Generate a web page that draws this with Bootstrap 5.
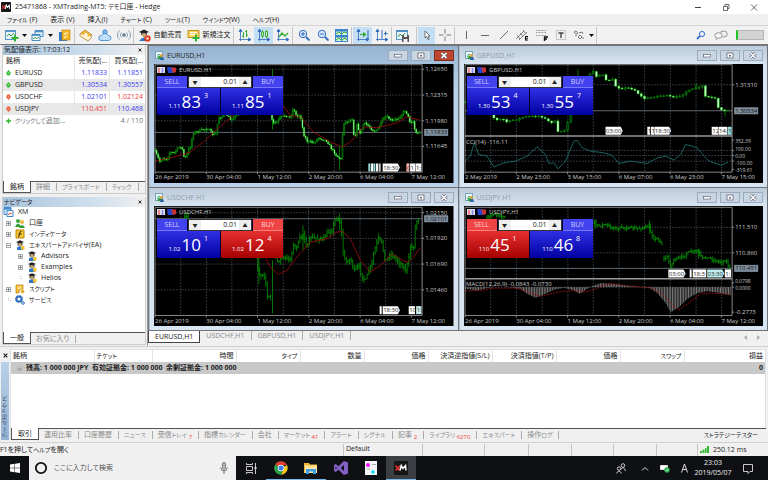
<!DOCTYPE html>
<html lang="ja">
<head>
<meta charset="utf-8">
<meta name="viewport" content="width=device-width, initial-scale=1">
<title>25471868 - XMTrading-MT5</title>
<link href="https://cdn.jsdelivr.net/npm/bootstrap@5.3.0/dist/css/bootstrap.min.css" rel="stylesheet">
<style>
body{font-family:"Open Sans","Noto Sans CJK JP",sans-serif;font-size:7px;line-height:10px;color:#222;background:#f0f0f0;font-feature-settings:"palt"}
button,input{font:inherit;color:inherit;border:0;background:none;padding:0;margin:0;border-radius:0;font-feature-settings:inherit}
svg{display:block;flex:none}
a{color:inherit;text-decoration:none}
.kana{font-size:6px}
/* title and menu */
.titlebar{background:#fff;height:14px;padding:0 10px 0 1px}
.menubar{height:12px;padding-left:7px;gap:13px;border-bottom:1px solid #d4d4d4}
/* toolbar */
.toolbar{height:19px;border-bottom:1px solid #777;padding-left:3px;background:#f1f1f1}
.tb{width:19px;height:17px;display:flex;align-items:center;justify-content:center;flex:none}
.tb.slim{width:17px}
.tb.arrow{width:9px}
.tb.wide{width:49px;gap:3px}
.tb.on{background:#c4def4}
.divider{width:1px;height:17px;background:#c6c6c6;margin-right:1px;flex:none}
.meter{width:28px;height:10px;background:#d2d2d2;border:1px solid #b5b5b5;border-left:2px solid #1fc41f}
/* side panels */
.side{width:148px;border-right:1px solid #9a9a9a;padding:0 1px 1px 2px;gap:3px;flex:none}
.panel{border:1px solid #ccc;border-top:0;background:#fff;flex:1 1 0}
.paneltitle{height:10px;padding:0 3px 0 1px;background:linear-gradient(90deg,#a9c4dd,#d5e2ee 70%,#f0f0f0)}
.quotes{width:100%;table-layout:fixed}
.quotes th,.quotes td{height:12px;padding:0 2px;text-align:right;font-weight:400;border-left:1px solid #e6e6e6;white-space:nowrap;line-height:10px;overflow:hidden}
.quotes th:first-child,.quotes td:first-child{text-align:left;border-left:0;padding-left:3px}
.quotes col:nth-child(1){width:50%}
.quotes .shade{background:#e8e8e8}
.quotes svg{display:inline-block;margin-right:4px;vertical-align:-1px}
.up{color:#3a3af0}.down{color:#f03a3a}
.tabs{height:12px;background:#f0f0f0;border-top:1px solid #555;color:#8a8a8a}
.tabs button{padding:0 6px 0 5px;height:8px;line-height:8px;border-right:1px solid #aaa;white-space:nowrap}
.tabs button.on{padding:0 6px;height:12px;margin-top:-1px;background:#fff;color:#222;border:1px solid #555;border-top:0;line-height:11px}
.tabs small{font-size:6px;color:#f03a3a;position:relative;top:2px}
.tree div{height:11px;gap:4px}
.tree .l1{padding-left:3px}
.tree .l2{padding-left:15px}
/* document area */
.desk{background:#6f7378;display:grid;grid-template-columns:1fr 1fr;gap:1px;padding:1px}
.win{background:#d7e4f2;padding:1px 4px 4px 4px;border:1px solid #b3bfca;border-width:0 0 0 1px}
.win.front{background:linear-gradient(#96b3d1,#b9d1ea 40px)}
.wintitle{height:17px;padding-left:1px;color:#8f99a3;gap:3px}
.front .wintitle{color:#222}
.win:not(.front){background:linear-gradient(#bccbd9,#d7e4f2 18px)}
.winbtn{width:20px;height:11px;border:1px solid #9dacbc;background:#c8d6e4;display:flex;align-items:center;justify-content:center}
.front .winbtn.close{background:#c0452f;border-color:#7c2a20}
.plot svg{width:100%;height:auto}
.plot text{font-size:6px;fill:#c9c9c9}
.plot .tiny{font-size:5px}
.plot .flag{fill:#222}
.trade{position:absolute;left:3px;top:12px;width:126px;color:#d5d8ff;background:#00002a}
.trade.low{top:13px}
.tradetop{height:12px;gap:1px}
.tag{width:30px;height:12px;line-height:11px;border-bottom:1px solid #7777ff;background:#4242ee;color:#cfd0ff}
.tag.red{background:#f04444;border-color:#ff8080;color:#ffd5d5}
.lot{background:#fff;color:#222;border:1px solid #333;height:12px}
.lot button{width:12px;background:#eee;font-size:5px}
.lot input{width:0;text-align:right;padding-right:2px}
.quote{flex:1;height:27px;color:#fff;background:linear-gradient(#3030e4,#0000a2);font-size:6px;line-height:18px;display:flex;justify-content:center;align-items:center;gap:1px}
.quote.red{background:linear-gradient(#e63030,#a60000)}
.quote b{font-weight:400;font-size:17px}
.quote i{font-style:normal;align-self:flex-end}
.quote sup{top:0;font-size:7px;line-height:10px;align-self:flex-start;margin:3px 0 0 2px}
.doctabs{height:13px;background:#f0f0f0}
.doctabs button{padding:0 6px;height:9px;line-height:9px;border-right:1px solid #aaa;color:#8a8a8a}
.doctabs button.on{height:12px;line-height:12px;background:#fff;color:#222;border:1px solid #444;border-top:0}
/* toolbox */
.toolbox{padding:2px 2px 2px 0;border-top:1px solid #d0d0d0}
.strip{width:8px;margin:0 1px;flex:none}
.striplabel{background:linear-gradient(#93b2d4,#b9d0e8);writing-mode:vertical-rl;transform:rotate(180deg);line-height:8px;color:#345;padding-top:2px}
.ledger{width:100%;table-layout:fixed}
.ledger th,.ledger td{height:12px;padding:0 2px;text-align:right;font-weight:400;white-space:nowrap;line-height:10px}
.ledger th+th{border-left:1px solid #e3e3e3}
.ledger td{background:#c8c8c8;font-weight:700}
.ledger .start{text-align:left}
.boxbody{min-height:79px}
.statusbar{height:14px;border-top:1px solid #d0d0d0}
.cell{border-left:1px solid #c4c4c4;height:12px;padding-left:2px}
/* taskbar */
.taskbar{background:#0e1013;height:24px;color:#eee;padding-right:14px}
.taskbar .app{width:30px;height:24px;display:flex;align-items:center;justify-content:center}
.app.run{border-bottom:1px solid #76b9ed}
.app.cur{background:#3b3f44}
.search{background:#f0f0f0;width:207px;height:24px;padding:0 8px 0 5px;gap:6px;color:#444}
.search input{width:0}
.search input::placeholder{color:#555;opacity:1}
</style>
<script src="https://cdn.jsdelivr.net/npm/bootstrap@5.3.0/dist/js/bootstrap.bundle.min.js"></script>
</head>
<body class="d-flex flex-column min-vh-100 m-0">
<svg width="0" height="0" class="position-absolute">
<symbol id="xm" viewBox="0 0 14 14"><rect width="14" height="14" rx="1" fill="#151515"/><path d="M1.500 4.500l4 5M6.500 4.500l-5 5" stroke="#e33" stroke-width="1.500"/><path d="M6 9.500l1.300-5 1.700 3 2.500-3 .5 5" stroke="#fff" stroke-width="1.500" fill="none"/></symbol>
<symbol id="tri" viewBox="0 0 5 3"><path d="M0 0h5L2.500 3z" fill="#111"/></symbol>
<symbol id="chart" viewBox="0 0 9 9"><rect x=".5" y=".5" width="7" height="7" fill="#eef6fb" stroke="#7aa0b8"/><path d="M2 6l2-3 2 2" stroke="#3a6" fill="none"/><path d="M3 8a2 2 0 014-2l2 2.500z" fill="#2f9a3c"/><circle cx="6.500" cy="4.500" r="1.600" fill="#d9a23a"/><path d="M5 9l1-3h2l1 3z" fill="#2b62ac"/></symbol>
<symbol id="pm" viewBox="0 0 5 5"><rect x=".5" y=".5" width="4" height="4" fill="#fff" stroke="#aaa"/><path d="M1 2.500h3M2.500 1v3" stroke="#456" stroke-width=".6"/></symbol>
<symbol id="mm" viewBox="0 0 5 5"><rect x=".5" y=".5" width="4" height="4" fill="#fff" stroke="#aaa"/><path d="M1 2.500h3" stroke="#456" stroke-width=".6"/></symbol>
<symbol id="ea" viewBox="0 0 10 10"><path d="M1 2l4-1.800L9 2 5 3.800z" fill="#222"/><path d="M2.500 3h5v2.500h-5z" fill="#444"/><circle cx="5" cy="4.600" r="1.700" fill="#caa06a"/><path d="M2 10V7.500Q5 5 8 7.500V10z" fill="#2e73c4"/><path d="M6 6h3.500v3.500H6z" fill="#f2c230"/></symbol>
<symbol id="script" viewBox="0 0 10 10"><path d="M1 1h7v5H4v3H1z" fill="#f4bd2a" stroke="#b97c0c" stroke-width=".7"/><path d="M2.500 3h4M2.500 4.800h3" stroke="#fff" stroke-width=".8"/><circle cx="7.500" cy="7.500" r="2" fill="#e5a514" stroke="#fff" stroke-width=".6"/></symbol>
<symbol id="gear" viewBox="0 0 10 10"><circle cx="4" cy="4" r="2.600" fill="none" stroke="#2e6dc0" stroke-width="2"/><circle cx="4" cy="4" r="3.600" fill="none" stroke="#2e6dc0" stroke-dasharray="1.200 1.600"/><circle cx="8" cy="8" r="1.300" fill="none" stroke="#2e6dc0"/></symbol>
<symbol id="x" viewBox="0 0 5 5"><path d="M.7.7l3.600 3.600M4.300.7L.7 4.300" stroke="currentColor" stroke-width="1.200"/></symbol>
<symbol id="dot-up" viewBox="0 0 5 6"><path d="M2.500 0L5 3 3.500 5.500h-2L0 3z" fill="#2eb82e"/><path d="M1.500 3h2" stroke="#fff" stroke-width=".7"/></symbol>
<symbol id="dot-down" viewBox="0 0 5 6"><path d="M2.500 6L5 3 3.500.5h-2L0 3z" fill="#ee5533"/><path d="M1.500 3h2" stroke="#fff" stroke-width=".7"/></symbol>
<symbol id="axes" viewBox="0 0 13 13"><path d="M2.500 1v11M1 10.500h11M2.500 0l-1.500 2.500h3zM13 10.500l-2.500-1.500v3z" stroke="#2f69c0" fill="#2f69c0" stroke-width=".8"/></symbol>
</svg>

<header class="titlebar d-flex align-items-center">
  <svg width="10" height="10"><use href="#xm"/></svg>
  <span class="ms-1 me-auto text-nowrap">25471868 - XMTrading-MT5: <span class="kana">デモ</span>口座 - Hedge</span>
  <div class="d-flex align-items-center" style="gap:20px">
    <button aria-label="最小化"><svg width="8" height="7"><path d="M1 3.500h6" stroke="#444"/></svg></button>
    <button aria-label="元に戻す"><svg width="8" height="7"><path d="M1.500 2.500h4v4h-4zM3 2V.5h4v4H6" fill="none" stroke="#444" stroke-width=".8"/></svg></button>
    <button aria-label="閉じる"><svg width="8" height="7"><path d="M1 .5l6 6M7 .5l-6 6" stroke="#444" stroke-width=".8"/></svg></button>
  </div>
</header>
<nav class="menubar d-flex align-items-center text-nowrap">
  <a href="#"><span class="kana">ファイル</span> (F)</a><a href="#">表示 (V)</a><a href="#">挿入(I)</a><a href="#"><span class="kana">チャート</span> (C)</a><a href="#"><span class="kana">ツール</span>(T)</a><a href="#"><span class="kana">ウインドウ</span>(W)</a><a href="#"><span class="kana">ヘルプ</span>(H)</a>
</nav>
<div class="toolbar d-flex align-items-center" role="toolbar">
  <button class="tb slim" aria-label="新規チャート"><svg width="14" height="13"><rect x=".5" y="1.500" width="10" height="9" fill="#e9f3fb" stroke="#5b96c8"/><path d="M1 2.500h9" stroke="#5b96c8"/><path d="M2 7l2-2 2 2 3-3" fill="none" stroke="#3aa34a"/><path d="M10 5.500v7M6.500 9h7" stroke="#35b135" stroke-width="2"/></svg></button>
  <button class="tb arrow" aria-label="一覧"><svg width="5" height="3"><use href="#tri"/></svg></button>
  <button class="tb slim" aria-label="プロファイル"><svg width="14" height="13"><path d="M4 1.500h8v6H4z" fill="#dceefa" stroke="#4c8dc7"/><path d="M4 2.500h8" stroke="#4c8dc7" stroke-width="1.500"/><path d="M1 5.500h8v6H1z" fill="#f4faff" stroke="#4c8dc7"/><path d="M1 6h8" stroke="#3f80c0" stroke-width="1.500"/><path d="M2 10l2-1.500 2 1 2-1.500" stroke="#3aa34a" fill="none"/></svg></button>
  <button class="tb arrow" aria-label="一覧"><svg width="5" height="3"><use href="#tri"/></svg></button>
  <button class="tb" aria-label="気配値表示"><svg width="13" height="13"><rect x="1" y="3" width="8" height="9" fill="#3679c8"/><rect x="4" y="1" width="8" height="10" fill="#f5b824" stroke="#b67a10" stroke-width=".6"/><path d="M10 4H7.500q-2 1.500 0 2.200t0 2.300H6" stroke="#fff" fill="none"/></svg></button><i class="divider"></i>
  <button class="tb" aria-label="マーケット"><svg width="14" height="12"><path d="M1 5l5-4 7 5-4 5z" fill="#efb43a" stroke="#a9721b" stroke-width=".7"/><path d="M1 5v2l8 5 4-4" fill="#fff3cf" stroke="#a9721b" stroke-width=".7"/><circle cx="7" cy="5.500" r="1.500" fill="#fff"/></svg></button>
  <button class="tb" aria-label="クラウド"><svg width="14" height="13"><circle cx="7" cy="3" r="2.300" fill="#7ab9ee" stroke="#3a81c7" stroke-width=".7"/><path d="M3 11.500a2.500 2.500 0 01.5-5 4 4 0 017 0 2.500 2.500 0 010 5z" fill="#bfe0fa" stroke="#3a81c7" stroke-width=".8"/></svg></button>
  <button class="tb" aria-label="シグナル"><svg width="14" height="12" fill="none" stroke="#8fa0b0"><circle cx="7" cy="6" r="1.500" fill="#667"/><path d="M4.500 3.500a3.500 3.500 0 000 5M9.500 3.500a3.500 3.500 0 010 5M2.500 1.500a6 6 0 000 9M11.500 1.500a6 6 0 010 9"/></svg></button><i class="divider"></i>
  <button class="tb wide"><svg width="13" height="13"><path d="M1 3l5-2.500L11 3 6 5z" fill="#222"/><path d="M3 4h6v2H3z" fill="#555"/><circle cx="6" cy="6" r="2" fill="#caa06a"/><path d="M1 12Q6 5 11 12z" fill="#2e73c4"/><circle cx="9.500" cy="9.500" r="3.200" fill="#e2401f"/><path d="M8.500 8.500h2v2h-2z" fill="#fff"/></svg>自動売買</button>
  <button class="tb wide"><svg width="13" height="13"><path d="M1 1.500h11v7H1z" fill="#f9d45a" stroke="#c08f1b"/><path d="M3 3.500h7M3 5.500h5" stroke="#fff"/><path d="M9 5.500v7M5.500 9h7" stroke="#35b135" stroke-width="2"/></svg>新規注文</button><i class="divider"></i>
  <button class="tb" aria-label="バー"><svg width="13" height="13"><use href="#axes"/><path d="M5.500 3v6M4 7h1.500M8.500 1v7M7 2.500h1.500M10 6H8.500" stroke="#3a3"/></svg></button>
  <button class="tb on" aria-label="ローソク足"><svg width="13" height="13"><use href="#axes"/><path d="M5.500 1v8M9.500 1v8" stroke="#3a3"/><path d="M4.500 3h2v4h-2zM8.500 2.500h2v5h-2z" fill="#dff5df" stroke="#3a3"/></svg></button>
  <button class="tb" aria-label="ライン"><svg width="13" height="13"><use href="#axes"/><path d="M3 8l3-4 3 3 3-3" stroke="#3a3" stroke-width="1.300" fill="none"/></svg></button><i class="divider"></i>
  <button class="tb" aria-label="拡大"><svg width="12" height="12"><circle cx="5" cy="5" r="3.700" fill="#d9ecfb" stroke="#2f69c0"/><path d="M8 8l3.500 3.500" stroke="#2f69c0" stroke-width="1.800"/><path d="M3 5h4M5 3v4" stroke="#2f69c0"/></svg></button>
  <button class="tb" aria-label="縮小"><svg width="12" height="12"><circle cx="5" cy="5" r="3.700" fill="#d9ecfb" stroke="#2f69c0"/><path d="M8 8l3.500 3.500" stroke="#2f69c0" stroke-width="1.800"/><path d="M3 5h4" stroke="#2f69c0"/></svg></button>
  <button class="tb" aria-label="整列"><svg width="13" height="13"><rect width="13" height="13" fill="#3a84cc"/><path d="M1 2.500h5V6H1zM7 2.500h5V6H7zM1 8.500h5V12H1zM7 8.500h5V12H7z" fill="#dcf2dc"/><path d="M1 5l3-2 2 2M7 5l2-2 3 1M1 11l3-2 2 2M7 11l3-2 2 2" stroke="#3a3" fill="none"/></svg></button><i class="divider"></i>
  <button class="tb on" aria-label="自動スクロール"><svg width="13" height="13"><use href="#axes"/><path d="M12 1v10" stroke="#2f69c0"/><path d="M4 5.500h6M7.500 3.500l2.500 2-2.500 2z" fill="#3a3" stroke="#3a3"/></svg></button>
  <button class="tb" aria-label="シフト"><svg width="13" height="13"><use href="#axes"/><path d="M7 1v9M12.500 4.500H9M10.500 2.500v4" stroke="#2f69c0"/></svg></button><i class="divider"></i>
  <button class="tb" aria-label="テンプレート"><svg width="14" height="13"><rect x=".5" y="1.500" width="11" height="9" fill="#e9f3fb" stroke="#5b96c8"/><path d="M1 2h11" stroke="#4c8dc7" stroke-width="2"/><path d="M2 8l2-3 2 2 3-3" fill="none" stroke="#3aa34a"/><path d="M6 6h7v7H6z" fill="#555"/><path d="M8 6h3v2H8zM7.500 10h4v3h-4z" fill="#eee"/></svg></button><i class="divider ms-1"></i>
  <button class="tb on slim" aria-label="カーソル"><svg width="8" height="11"><path d="M2 1v7l1.500-1.500L5 9.500l1.200-.5L5 6h2z" fill="#fff" stroke="#555" stroke-width=".8"/></svg></button>
  <button class="tb" aria-label="十字"><svg width="12" height="12"><path d="M6 0v4.500M6 7.500V12M0 6h4.500M7.500 6H12" stroke="#777"/></svg></button><i class="divider"></i>
  <button class="tb" aria-label="垂直線"><svg width="12" height="10"><path d="M6.500 1v8" stroke="#666"/></svg></button>
  <button class="tb" aria-label="水平線"><svg width="12" height="10"><path d="M2 5.500h8" stroke="#666"/></svg></button>
  <button class="tb" aria-label="トレンド"><svg width="12" height="10"><path d="M2 9l8-8" stroke="#666"/></svg></button>
  <button class="tb" aria-label="チャネル"><svg width="13" height="12"><path d="M0 10l8-8M3 11l8-8M1 6l3 4M4 4l3 4M7 1l3 4" stroke="#777" stroke-width=".9"/><path d="M9.500 7.500H12M9.500 11H12M9.500 9.200H12M9.500 7v4.500" stroke="#111"/></svg></button>
  <button class="tb" aria-label="フィボナッチ"><svg width="12" height="12"><path d="M0 1.500h10M0 3.500h10M0 6.500h10" stroke="#999" stroke-dasharray="1 .5"/><path d="M8 8h4M8 10h3M8.500 7.500V12" stroke="#111" stroke-width="1.400"/></svg></button>
  <button class="tb" aria-label="テキスト"><svg width="12" height="12"><path d="M1.500 1.500h9v9h-9z" fill="none" stroke="#999" stroke-dasharray="1 1"/><path d="M3.500 4h5M6 4v5" stroke="#444" stroke-width="1.400"/></svg></button>
  <button class="tb slim" aria-label="オブジェクト"><svg width="12" height="10"><path d="M1 2l2-1 2 2-2 1zM6 3l3-1 1 2M2 6l2-1M5 7l2-2 2 2-2 2zM9 8h2" fill="none" stroke="#777"/></svg></button>
  <button class="tb arrow" aria-label="一覧"><svg width="5" height="3"><use href="#tri"/></svg></button><i class="divider"></i>
  <div class="d-flex align-items-center ms-auto me-1" style="gap:8px">
    <button aria-label="検索"><svg width="10" height="10"><circle cx="6" cy="4" r="2.600" fill="#e5effa" stroke="#3f6fc4"/><path d="M4 6L1 9" stroke="#3f6fc4" stroke-width="1.800"/></svg></button>
    <button aria-label="チャット"><svg width="14" height="10"><ellipse cx="9.500" cy="4" rx="3.800" ry="3" fill="#eee" stroke="#999"/><ellipse cx="4.500" cy="5.500" rx="3.800" ry="2.800" fill="#f6f6f6" stroke="#999"/><path d="M3 8l-1 2" stroke="#999"/></svg></button>
    <div class="meter"></div>
  </div>
</div>

<main class="d-flex flex-grow-1">
  <aside class="side d-flex flex-column">
    <section class="panel d-flex flex-column">
      <div class="paneltitle d-flex align-items-center justify-content-between"><span>気配値表示: 17:03:12</span><svg width="4" height="4"><use href="#x"/></svg></div>
      <table class="quotes"><colgroup><col><col><col></colgroup>
        <thead><tr><th>銘柄</th><th>売気配(...</th><th>買気配(...</th></tr></thead>
        <tbody>
          <tr><td><svg width="5" height="6"><use href="#dot-up"/></svg>EURUSD</td><td class="up">1.11833</td><td class="up">1.11851</td></tr>
          <tr class="shade"><td><svg width="5" height="6"><use href="#dot-up"/></svg>GBPUSD</td><td class="up">1.30534</td><td class="up">1.30557</td></tr>
          <tr><td><svg width="5" height="6"><use href="#dot-down"/></svg>USDCHF</td><td class="up">1.02101</td><td class="down">1.02124</td></tr>
          <tr class="shade"><td><svg width="5" height="6"><use href="#dot-down"/></svg>USDJPY</td><td class="down">110.451</td><td class="up">110.468</td></tr>
          <tr class="text-secondary"><td colspan="2"><svg width="5" height="6"><path d="M2.500.5v5M0 3h5" stroke="#2eb82e" stroke-width="1.300"/></svg><span class="kana">クリックして</span>追加...</td><td class="border-0">4 / 110</td></tr>
        </tbody></table>
      <div class="tabs d-flex mt-auto align-items-center"><button class="on">銘柄</button><button>詳細</button><button class="kana">プライスボード</button><button class="kana">ティック</button></div>
    </section>
    <section class="panel d-flex flex-column">
      <div class="paneltitle d-flex align-items-center justify-content-between"><span class="kana">ナビゲータ</span><svg width="4" height="4"><use href="#x"/></svg></div>
      <div class="tree">
        <div class="d-flex align-items-center"><svg width="11" height="10"><path d="M1 .5h7v7H1z" fill="#cfe6f8" stroke="#3f8acb"/><path d="M1 1.500h7" stroke="#3f8acb" stroke-width="2"/><path d="M4 3.500h6v6H4z" fill="#fff" stroke="#3f8acb"/><path d="M5 8l2-2 2 1" stroke="#e44" fill="none"/></svg>XM</div>
        <div class="l1 d-flex align-items-center"><svg width="5" height="5"><use href="#pm"/></svg><svg width="10" height="10"><circle cx="3" cy="3" r="2" fill="#3aa53a"/><circle cx="7" cy="4" r="2" fill="#e6b93a"/><path d="M0 9q3-7 6 0zM4 10q3-6 6 0z" fill="#2f9a2f"/></svg>口座</div>
        <div class="l1 d-flex align-items-center"><svg width="5" height="5"><use href="#pm"/></svg><svg width="10" height="10"><path d="M1 1h8v8H1z" fill="#f7c52e" stroke="#b8860b"/><path d="M6.500 2.500q-2-.5-2 2.500t-1.500 3M3.500 5h3" stroke="#222" fill="none" stroke-width=".9"/></svg><span class="kana">インディケータ</span></div>
        <div class="l1 d-flex align-items-center"><svg width="5" height="5"><use href="#mm"/></svg><svg width="10" height="10"><use href="#ea"/></svg><span><span class="kana">エキスパートアドバイザ</span>(EA)</span></div>
        <div class="l2 d-flex align-items-center"><svg width="5" height="5"><use href="#pm"/></svg><svg width="10" height="10"><use href="#ea"/></svg>Advisors</div>
        <div class="l2 d-flex align-items-center"><svg width="5" height="5"><use href="#pm"/></svg><svg width="10" height="10"><use href="#ea"/></svg>Examples</div>
        <div class="l2 d-flex align-items-center"><svg width="5" height="5"><path d="M2.500 0v2.500H5" stroke="#bbb" fill="none" stroke-dasharray="1 1"/></svg><svg width="10" height="10"><use href="#ea"/></svg>Helios</div>
        <div class="l1 d-flex align-items-center"><svg width="5" height="5"><use href="#pm"/></svg><svg width="10" height="10"><use href="#script"/></svg><span class="kana">スクリプト</span></div>
        <div class="l1 d-flex align-items-center"><svg width="5" height="5"><path d="M2.500 0v2.500H5" stroke="#bbb" fill="none" stroke-dasharray="1 1"/></svg><svg width="10" height="10"><use href="#gear"/></svg><span class="kana">サービス</span></div>
      </div>
      <div class="tabs d-flex mt-auto align-items-center"><button class="on">一般</button><button>お気に入り</button></div>
    </section>
  </aside>
  <div class="flex-grow-1 d-flex flex-column">
    <div class="desk" id="desk"></div>
    <div class="doctabs d-flex"><button class="on">EURUSD,H1</button><button>USDCHF,H1</button><button>GBPUSD,H1</button><button>USDJPY,H1</button>
      <span class="ms-auto me-1 pe-1 d-flex align-items-center gap-2"><svg width="4" height="5"><path d="M3 0v5L0 2.500z" fill="#aaa"/></svg><svg width="4" height="5"><path d="M1 0v5l3-2.500z" fill="#aaa"/></svg></span></div>
  </div>
</main>

<section class="toolbox d-flex">
  <div class="strip d-flex flex-column align-items-center"><svg class="my-1" width="5" height="5"><use href="#x"/></svg><div class="striplabel flex-grow-1 w-100 kana">ツールボックス</div></div>
  <div class="flex-grow-1 bg-white d-flex flex-column border-start">
    <div class="boxbody flex-grow-1 border-top border-end">
    <table class="ledger"><colgroup><col style="width:83px"><col style="width:58px"><col style="width:84px"><col style="width:64px"><col style="width:64px"><col style="width:64px"><col style="width:64px"><col style="width:64px"><col style="width:64px"><col style="width:64px"><col></colgroup>
      <thead><tr><th class="start">銘柄</th><th class="start kana">チケット</th><th>時間</th><th class="kana">タイプ</th><th>数量</th><th>価格</th><th>決済逆指値(S/L)</th><th>決済指値(T/P)</th><th>価格</th><th class="kana">スワップ</th><th>損益</th></tr></thead>
      <tbody><tr><td class="start" colspan="10"><svg class="d-inline-block mx-1" width="5" height="5"><circle cx="2.500" cy="2.500" r="2" fill="#eee" stroke="#888" stroke-width=".7"/><path d="M1 3h3" stroke="#777"/></svg>残高: 1 000 000 JPY&nbsp; 有効証拠金: 1 000 000&nbsp; 余剰証拠金: 1 000 000</td><td>0</td></tr></tbody></table>
    </div>
    <div class="tabs d-flex align-items-center"><button class="on">取引</button><button>運用比率</button><button>口座履歴</button><button class="kana">ニュース</button><button>受信<span class="kana">トレイ</span> <small>7</small></button><button>指標<span class="kana">カレンダー</span></button><button>会社</button><button class="kana">マーケット <small>41</small></button><button class="kana">アラート</button><button class="kana">シグナル</button><button>記事 <small>2</small></button><button class="kana">ライブラリ <small>6270</small></button><button class="kana">エキスパート</button><button>操作<span class="kana">ログ</span></button><a href="#" class="ms-auto me-2 text-dark kana">ストラテジーテスター</a></div>
  </div>
</section>
<footer class="statusbar d-flex align-items-center">
  <span class="flex-grow-1">F1を押して<span class="kana">ヘルプ</span>を開く</span>
  <span class="cell" style="width:79px">Default</span><span class="cell" style="width:62px"></span><span class="cell" style="width:44px"></span><span class="cell" style="width:43px"></span><span class="cell" style="width:42px"></span><span class="cell" style="width:43px"></span><span class="cell" style="width:41px"></span>
  <span class="cell d-flex align-items-center gap-1" style="width:71px"><svg width="9" height="7"><path d="M0 7V5h2v2zM2.500 7V3.500h2V7zM5 7V2h1.500v5zM7 7V0h2v7z" fill="#2eb82e"/></svg>250.12 ms</span>
</footer>
<nav class="taskbar d-flex align-items-center">
  <button class="app" aria-label="スタート" style="width:29px"><svg width="10" height="10"><path d="M0 1.500l4.500-.7v4H0zM5 .7L10 0v4.800H5zM0 5.300h4.500v4L0 8.600zM5 5.300h5V10l-5-.7z" fill="#fff"/></svg></button>
  <label class="search d-flex align-items-center"><svg width="14" height="14"><circle cx="7" cy="7" r="5.200" fill="none" stroke="#111" stroke-width="1.800"/></svg><input class="flex-grow-1" type="text" aria-label="検索" placeholder="ここに入力して検索"><svg width="8" height="12"><rect x="2.500" y=".5" width="3" height="6.500" rx="1.500" fill="#bbb" stroke="#666" stroke-width=".8"/><path d="M.8 5.500a3.200 3.200 0 006.400 0M4 9v3" stroke="#666" fill="none"/></svg></label>
  <button class="app" aria-label="タスクビュー"><svg width="12" height="11" fill="none" stroke="#ddd" stroke-width=".9"><path d="M1.500 3.500h6v4h-6zM1.500 0v1.500h6V0M1.500 11V9.500h6V11M10.500 0v11"/><path d="M9.500 5h2" stroke-width="2"/></svg></button>
  <button class="app run" aria-label="Chrome"><svg width="14" height="14"><path d="M7 7L1.200 3.500A6.700 6.700 0 0113 4H7z" fill="#e2402f"/><path d="M7 7l6-3a6.700 6.700 0 01-6 9.700L9.500 8z" fill="#fbc719"/><path d="M7 7l2 2-2 4.700A6.700 6.700 0 011.200 3.500z" fill="#2fa24c"/><circle cx="7" cy="7" r="3.200" fill="#fff"/><circle cx="7" cy="7" r="2.500" fill="#3b7ded"/></svg></button>
  <button class="app run" aria-label="エクスプローラー"><svg width="14" height="12"><path d="M0 1h5l1 1.500h7V11H0z" fill="#f2b93b"/><path d="M1 3.500h12V11H1z" fill="#ffe39a"/><path d="M2 12V7h10v5H9V9.500H5V12z" fill="#3ba0e6"/></svg></button>
  <button class="app" aria-label="Visual Studio"><svg width="14" height="14"><path d="M10 0l4 1.500v11L10 14 4.500 8.800 1.800 11 0 10V4l1.800-1 2.700 2.200zM10 4L6.800 7 10 10zM1.500 5.500v3L3 7z" fill="#8661c5" fill-rule="evenodd"/></svg></button>
  <button class="app" aria-label="メモ"><svg width="12" height="14"><path d="M0 0h12v14H0z" fill="#f5f5f5"/><circle cx="3" cy="4" r="2" fill="#f0f"/><circle cx="8" cy="11" r="1.800" fill="#0df"/><path d="M7 3.500h4M2 8h3" stroke="#aaa"/></svg></button>
  <button class="app run cur" aria-label="XM"><svg width="14" height="14"><use href="#xm"/></svg></button>
  <div class="ms-auto d-flex align-items-center" style="gap:11px">
    <svg width="10" height="11" fill="none" stroke="#ddd" stroke-width=".9"><circle cx="7" cy="2.500" r="1.800"/><circle cx="3" cy="5.500" r="1.700"/><path d="M.5 10.500q2.500-5 5 0M4.800 6.500q3-4 4.700 1.500"/></svg>
    <svg class="ms-1" width="8" height="5"><path d="M1 4.500l3-3 3 3" fill="none" stroke="#ddd"/></svg>
    <svg width="10" height="9"><path d="M.5 1.500h7v4h-7z" fill="#fff" stroke="#ddd"/><circle cx="7" cy="6" r="2.700" fill="#25b14c"/><path d="M5.800 6l1 1 1.500-2" stroke="#fff" fill="none" stroke-width=".8"/></svg>
    <svg width="7" height="10"><path d="M.5 9.500L3.500 1l3 8.500M1.500 6.500h4" fill="none" stroke="#ddd"/></svg>
  </div>
  <div class="text-center ms-1" style="width:42px">23:03<br>2019/05/07</div>
  <svg class="ms-2" width="12" height="11"><path d="M1.500 1.500h9v7H8L6 10.500V8.500H1.500z" fill="none" stroke="#ddd" stroke-width=".9"/></svg>
</nav>

<script>
// Chart data is digitised on a grid of three units per pixel; ox/oy is the origin of each plot.
// A price may carry a third value: where its label sits when the levels are close together.
const charts = [
 {name:'EURUSD',front:true,ox:12,oy:54,h:119,l:15,r:815,t:56,b:378,v:[92,169,245,322,399,475,552,629,706,783],
  hg:[70,147,224,301],line:259,style:'candle',step:4.8,
  prices:[[70,'1.12650'],[147,'1.12315'],[224,'1.11980'],[301,'1.11645']],cur:'1.11833',
  dates:['26 Apr 2019','30 Apr 04:00','1 May 12:00','2 May 20:00','6 May 04:00','7 May 12:00'],
  runs:[[15,315,22,330,30,348,38,335,50,340,60,318,72,320,85,305,95,300,100,330,108,335,115,310,122,300,128,262,145,255,160,250,175,248,190,268,198,262,205,215,215,212,225,200,240,220,300,180,360,190,367,232,378,230,390,215,405,208,420,215,430,185,440,215,450,205,460,265,470,285,490,290,505,275,530,285,545,310,560,330,572,340,576,270,580,230,595,225,606,218,612,285,620,235,630,265,640,230,655,240,670,255,685,250,690,228,708,212,725,225,745,215,765,192,780,230,788,225,795,262,808,258]],
  wicks:[[367,70,250],[568,300,372]],
  ma:[15,345,60,335,100,325,120,318,160,288,200,250,245,212,300,160,400,180,420,208,450,212,490,258,520,275,545,290,575,302,600,288,640,242,680,245,735,232,770,212,808,222],
  flags:[[654,0,'','#9dd'],[662,0,'','#fff'],[669,0,'','#9dd'],[677,0,'','#fff'],[685,0,'','#ccc'],[697,50,'18:30','#fff'],[768,10,'0','#fbb'],[779,16,'1','#fff'],[795,19,'1:','#fff']],fy:352,
  sell:['1.11','83','3'],buy:['1.11','85','1']},
 {name:'GBPUSD',ox:21,oy:54,h:119,l:24,r:824,t:56,b:378,v:[101,178,255,332,408,485,562,639,716,793],
  hg:[116],line:194,style:'candle',step:9.6,sub:270,
  prices:[[116,'1.31310'],[282,'352.39',284],[313,'100.00',308],[328,'0.00',329],[345,'-100.00',350],[370,'-319.61',371]],cur:'1.30534',
  dates:['2 May 2019','2 May 23:00','3 May 15:00','6 May 07:00','6 May 23:00','7 May 15:00'],
  runs:[[24,170,100,190,110,215,120,222,135,218,150,228,165,222,180,220,200,212,250,210,270,222,280,230,295,225,302,258,312,255,325,250,335,215,345,190,360,110,365,95,380,110,395,85,410,75,420,95,435,80,440,100,450,105,465,100,475,120,490,128,510,125,530,130,545,145,560,158,580,155,600,150,625,148,650,155,670,148,690,135,710,128,735,120,740,150,760,155,775,158,782,185,795,195,815,190]],
  wicks:[[362,70,120],[716,112,130],[803,190,210]],
  cci:[24,345,40,330,52,290,65,325,90,330,110,362,140,350,175,345,210,330,240,302,265,325,275,352,290,350,303,368,325,345,350,285,360,283,375,305,400,315,440,320,465,328,485,352,520,345,570,352,600,335,625,330,650,342,670,325,685,295,720,305,740,330,755,345,790,357,812,348],
  hg2:[313,328,345],note:'CCI(14) -116.11',
  flags:[[445,50,'03:00','#fff'],[570,10,'1','#fff'],[581,10,'1','#fff'],[591,49,'18:30','#fff'],[763,20,'12','#fff'],[783,28,'14:','#fff'],[811,13,'1','#9dd']],fy:242,
  sell:['1.30','53','4'],buy:['1.30','55','7']},
 {name:'USDCHF',low:true,ox:12,oy:57,h:120,l:15,r:815,t:61,b:385,v:[92,169,245,322,399,475,552,629,706,783],
  hg:[77,154,231,308],line:95,style:'bar',step:4.8,
  prices:[[77,'1.02150'],[154,'1.01920'],[231,'1.01690'],[308,'1.01460']],cur:'1.02101',
  dates:['26 Apr 2019','30 Apr 04:00','1 May 12:00','2 May 20:00','6 May 04:00','7 May 12:00'],
  runs:[[104,92,114,88],[318,205,325,265,340,260,350,300,352,335,360,325,366,330],[372,190,380,225,395,210,405,215,420,215,430,175,440,180,450,150,460,140,470,185,480,150,500,155,520,155,530,140,545,130,555,95,568,100,574,140,580,215,590,225,600,215,612,250,625,235,635,270,645,280,655,250,665,225,672,190,685,150,695,170,705,225,720,200,735,215,750,230,765,250,775,215,778,180,790,180,795,110,803,95,808,97]],
  wicks:[[367,220,378],[568,80,130],[326,210,290],[458,115,190]],
  ma:[345,210,360,240,385,262,410,250,440,210,480,165,530,155,560,135,575,133,600,155,630,220,660,255,690,235,725,200,760,222,775,225,790,210,808,183],
  flags:[[688,0,'','#fff'],[697,50,'18:30','#fff'],[775,20,'10','#fff'],[797,17,'1:','#cee']],fy:357,
  sell:['1.02','10','1'],buy:['1.02','12','4'],buyRed:true},
 {name:'USDJPY',low:true,ox:21,oy:57,h:120,l:24,r:824,t:61,b:385,v:[101,178,255,332,408,485,562,639,716,793],
  hg:[121,197],line:244,style:'bar',step:4.8,sub:275,
  prices:[[121,'111.510'],[197,'110.860'],[287,'0.0798',283],[300,'0.0000',304],[375,'-0.2773']],cur:'110.451',
  dates:['26 Apr 2019','30 Apr 04:00','1 May 12:00','2 May 20:00','6 May 04:00','7 May 12:00'],
  runs:[[90,95,110,80,125,84,145,92],[412,105,420,118,440,112,460,120,480,125,500,122,540,125,575,120,580,135,590,155,600,155,615,172],[620,215,630,210,640,240,650,215,665,215,680,205,695,195,720,192,735,215,750,210,770,220,790,225,805,220,818,245]],
  wicks:[[577,100,140],[413,96,125],[723,185,215]],
  macd:[24,305,60,310,90,303,110,300,150,300,190,305,210,320,235,332,260,322,290,308,320,302,345,308,368,320,390,305,405,297,430,288,470,290,520,297,575,302,600,318,625,348,640,375,665,360,690,335,720,318,750,312,790,318,820,325],
  signal:[24,312,70,310,110,303,180,303,220,318,250,328,300,315,350,310,380,315,410,308,450,290,520,297,580,302,620,325,650,360,665,368,690,350,730,320,760,318,820,322],
  hg2:[300],note:'MACD(12,26,9) -0.0843 -0.0730',
  flags:[[633,50,'03:00','#fff'],[697,0,'','#fff'],[706,42,'18:3','#fff'],[749,50,'03:30','#bfeeee'],[802,20,'1:','#fff']],fy:247,
  sell:['110','45','1'],buy:['110','46','8'],sellRed:true}
];
const at=(p,x)=>{for(let i=2;i<p.length;i+=2)if(x<=p[i])return p[i-1]+(p[i+1]-p[i-1])*(x-p[i-2])/(p[i]-p[i-2]);return p[p.length-1]};
function plot(c){
  let seed=7;const rnd=()=>(seed=(seed*16807)%2147483647)/2147483647;
  const X=x=>+((x-c.ox)/3).toFixed(1),Y=y=>+((y-c.oy)/3).toFixed(1);
  const path=a=>{let d='';for(let i=0;i<a.length;i+=2)d+=(i?'L':'M')+X(a[i])+' '+Y(a[i+1]);return d};
  let s=`<rect width="299" height="${c.h}" fill="#000"/>`,g='';
  c.v.forEach(x=>g+=`M${X(x)} ${Y(c.t)}V${Y(c.b)}`);
  c.hg.concat(c.hg2||[]).forEach(y=>g+=`M${X(c.l)} ${Y(y)}H${X(c.r)}`);
  s+=`<path d="${g}" stroke="#56636f" stroke-width=".7" stroke-dasharray="1.500 1.500" fill="none"/>`;
  s+=`<path d="M${X(c.l)} ${Y(c.line)}H${X(c.r)}" stroke="#76838f" stroke-width=".8"/>`;
  let w='',up='',dn='';
  const bar=c.style=='bar',wide=c.step>5,reach=bar?(c.sub?9:13):(wide?6:7);
  c.runs.forEach(r=>{let prev=r[1];
    for(let x=r[0];x<=r[r.length-2];x+=c.step){
      const y=at(r,x)+(rnd()-.5)*(wide?3:6),hi=Math.min(prev,y)-rnd()*reach,lo=Math.max(prev,y)+rnd()*reach;
      w+=`M${X(x)} ${Y(hi)}V${Y(lo)}`;
      const half=wide?1:.5;
      if(bar)w+=`M${(X(x)-.8).toFixed(1)} ${Y(prev)}h.8M${X(x)} ${Y(y)}h.8`;
      else{const b=`M${(X(x)-half).toFixed(1)} ${Y(Math.min(prev,y))}h${half*2}v${Math.max(.6,Math.abs(prev-y)/3).toFixed(1)}h${-half*2}z`;prev>y?up+=b:dn+=b}
      prev=y}});
  c.wicks.forEach(k=>w+=`M${X(k[0])} ${Y(k[1])}V${Y(k[2])}`);
  s+=`<path d="${w}" stroke="#009600" stroke-width=".8" fill="none"/><path d="${up}" fill="#031" stroke="#0b0" stroke-width=".4"/><path d="${dn}" fill="#c8ffc8" stroke="#2e2" stroke-width=".4"/>`;
  if(c.ma)s+=`<path d="${path(c.ma)}" stroke="#a01010" stroke-width=".8" fill="none"/>`;
  if(c.cci)s+=`<path d="${path(c.cci)}" stroke="#1f7575" stroke-width=".8" fill="none"/>`;
  if(c.macd){let m='';for(let x=26;x<822;x+=4.8)m+=`M${X(x)} ${Y(300)}V${Y(at(c.macd,x))}`;
    s+=`<path d="${m}" stroke="#888" stroke-width=".9"/><path d="${path(c.signal)}" stroke="#b01515" stroke-width=".8" fill="none" stroke-dasharray="2 1"/>`}
  s+=`<path d="M${X(c.l)} ${Y(c.t)}H${X(c.r)}V${Y(c.b)}H${X(c.l)}z" fill="none" stroke="#a8a8a8" stroke-width=".8"/>`;
  if(c.sub)s+=`<path d="M${X(c.l)} ${Y(c.sub)}H${X(c.r)}" stroke="#999" stroke-width="1.500"/>`;
  c.flags.forEach(f=>{const x=X(f[0]),y=Y(c.fy),wd=f[1]/3;
    if(!f[2])s+=`<rect x="${x}" y="${y}" width="2" height="8" fill="${f[3]}"/>`;
    else s+=`<path d="M${x} ${y}h${(wd-(wd>14?1.5:.4)).toFixed(1)}${wd>14?'l2 4-2 4':'v8'}H${x}z" fill="${f[3]}"/><text class="flag" x="${x+.5}" y="${y+6.2}">${f[2]}</text>`});
  c.prices.forEach(p=>s+=`<path d="M${X(c.r)} ${Y(p[0])}h2" stroke="#aaa" stroke-width=".8"/><text class="${p[2]?'tiny':''}" x="${X(c.r)+3}" y="${Y(p[2]||p[0])+2}">${p[1]}</text>`);
  s+=`<rect x="${X(c.r)+2}" y="${Y(c.line)-3.5}" width="24" height="7" fill="#7d8c9b"/><text x="${X(c.r)+3}" y="${Y(c.line)+2}" style="fill:#111">${c.cur}</text>`;
  c.dates.forEach((d,i)=>s+=`<path d="M${X(c.l+i*153.6)} ${Y(c.b)}v2" stroke="#aaa" stroke-width=".8"/><text x="${X(c.l+i*153.6)}" y="${Y(c.b)+7.3}">${d}</text>`);
  if(c.note)s+=`<text x="2" y="${Y(c.sub)+7.5}">${c.note}</text>`;
  s+=`<rect x="3" y="3" width="8" height="6" fill="#dde"/><path d="M5 4v5" stroke="#e88" stroke-width="2"/><path d="M8.500 4v5" stroke="#88e" stroke-width="1.500"/><path d="M13 3h6v6h-5z" fill="#24c"/><path d="M17 3.500h5V8l-3 1z" fill="#c33"/><text x="25" y="8">${c.name},H1</text>`;
  return `<svg viewBox="0 0 299 ${c.h}" role="img" aria-label="${c.name},H1">${s}</svg>`;
}
const quote=(q,red)=>`<button class="quote ${red?'red':''}"><i>${q[0]}</i><b>${q[1]}</b><sup>${q[2]}</sup></button>`;
document.getElementById('desk').innerHTML=charts.map(c=>`
<section class="win ${c.front?'front':''}">
  <div class="wintitle d-flex align-items-center"><svg width="9" height="9"><use href="#chart"/></svg><span class="me-auto">${c.name},H1</span>
    <button class="winbtn" aria-label="最小化"><svg width="8" height="5"><rect x=".5" y="1.500" width="7" height="2.500" fill="#fff" stroke="#667" stroke-width=".7"/></svg></button><button class="winbtn" aria-label="最大化"><svg width="8" height="7"><rect x="1" y="1" width="6" height="5" fill="#fff" stroke="#667" stroke-width=".8"/><rect x="3" y="3" width="2" height="1.500" fill="#667"/></svg></button><button class="winbtn close" aria-label="閉じる"><svg width="8" height="7"><path d="M1.500 1l5 5M6.500 1l-5 5" stroke="#667" stroke-width="3"/><path d="M1.500 1l5 5M6.500 1l-5 5" stroke="#fff" stroke-width="1.600"/></svg></button></div>
  <div class="plot position-relative">${plot(c)}
    <div class="trade ${c.low?'low':''}">
      <div class="tradetop d-flex"><button class="tag ${c.sellRed?'red':''}">SELL</button><div class="lot d-flex flex-grow-1"><button aria-label="減らす">▼</button><input class="flex-grow-1" type="text" aria-label="ロット" value="0.01"><button aria-label="増やす">▲</button></div><button class="tag ${c.buyRed?'red':''}">BUY</button></div>
      <div class="d-flex" style="gap:1px">${quote(c.sell,c.sellRed)}${quote(c.buy,c.buyRed)}</div>
    </div></div>
</section>`).join('');
</script>
</body>
</html>
